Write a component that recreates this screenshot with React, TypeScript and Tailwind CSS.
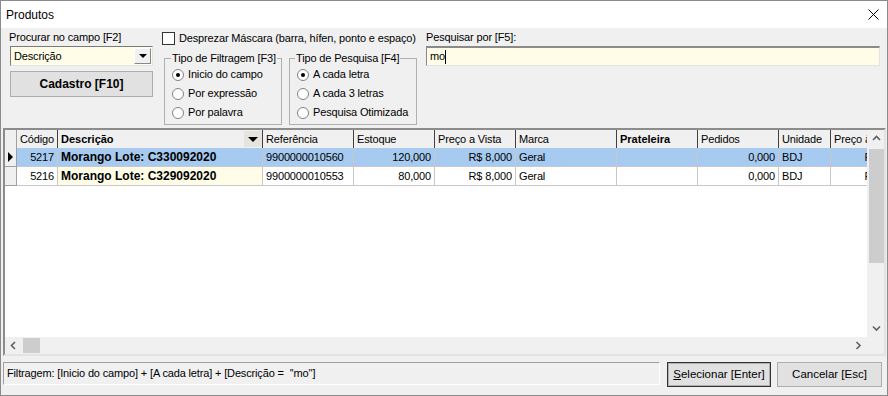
import React from "react";

type Col = { w: number; label: string; bold?: boolean; align: "l" | "r" };

const cols: Col[] = [
  { w: 41, label: "Código", align: "r" },
  { w: 205, label: "Descrição", bold: true, align: "l" },
  { w: 91, label: "Referência", align: "l" },
  { w: 81, label: "Estoque", align: "r" },
  { w: 81, label: "Preço a Vista", align: "r" },
  { w: 101, label: "Marca", align: "l" },
  { w: 81, label: "Prateleira", bold: true, align: "l" },
  { w: 81, label: "Pedidos", align: "r" },
  { w: 52, label: "Unidade", align: "l" },
  { w: 81, label: "Preço à Vista", align: "r" },
];

const rows = [
  ["5217", "Morango Lote: C330092020", "9900000010560", "120,000", "R$ 8,000", "Geral", "", "0,000", "BDJ", "R$ 8,000"],
  ["5216", "Morango Lote: C329092020", "9900000010553", "80,000", "R$ 8,000", "Geral", "", "0,000", "BDJ", "R$ 8,000"],
];

function Radio({ checked, label, ml }: { checked?: boolean; label: string; ml: string }) {
  return (
    <div className="flex items-center h-[19px]">
      <span className={`${ml} w-[12px] h-[12px] shrink-0 rounded-full border border-[#838383] bg-white flex items-center justify-center`}>
        {checked && <span className="w-[4px] h-[4px] rounded-full bg-black" />}
      </span>
      <span className="ml-[4px] whitespace-nowrap">{label}</span>
    </div>
  );
}

function Chevron({ dir }: { dir: "up" | "down" | "left" | "right" }) {
  const pts =
    dir === "up"
      ? "1,5 4.5,1.5 8,5"
      : dir === "down"
      ? "1,1.5 4.5,5 8,1.5"
      : dir === "left"
      ? "5,1 1.5,4.5 5,8"
      : "1.5,1 5,4.5 1.5,8";
  const w = dir === "up" || dir === "down" ? 9 : 7;
  const h = dir === "up" || dir === "down" ? 7 : 9;
  return (
    <svg width={w} height={h} viewBox={`0 0 ${w} ${h}`}>
      <polyline points={pts} fill="none" stroke="#606060" strokeWidth="1.6" />
    </svg>
  );
}

export default function App() {
  return (
    <div className="w-[888px] h-[396px] bg-[#f0f0f0] border border-[#8a8a8a] flex flex-col font-['Liberation_Sans',Arial,sans-serif] text-[11px] tracking-[-0.15px] text-black overflow-hidden">
      {/* Title bar */}
      <div className="h-[27px] bg-white flex items-center justify-between shrink-0">
        <span className="ml-[5px] text-[12px] tracking-normal">Produtos</span>
        <svg width="11" height="11" viewBox="0 0 11 11" className="mr-[8px]">
          <path d="M0.5 0.5 L10.5 10.5 M10.5 0.5 L0.5 10.5" stroke="#000" strokeWidth="1" />
        </svg>
      </div>

      {/* Top panel */}
      <div className="h-[100px] flex shrink-0">
        {/* Column 1 */}
        <div className="ml-[9px] w-[143px] flex flex-col pt-[3px]">
          <div className="h-[13px] leading-[13px] -ml-[1px]">Procurar no campo [F2]</div>
          <div className="mt-[2px] h-[20px] flex bg-[#fffde8] border border-[#7a7a7a] border-b-[#e3e3e3] border-r-[#e3e3e3]">
            <span className="flex-1 pl-[3px] leading-[18px]">Descrição</span>
            <span className="w-[17px] h-[16px] mt-[1px] mr-[1px] bg-[#f0f0f0] border border-[#ffffff] border-b-[#888] border-r-[#888] flex items-center justify-center">
              <svg width="8" height="4" viewBox="0 0 8 4"><path d="M0 0 L8 0 L4 4 Z" fill="#000" /></svg>
            </span>
          </div>
          <button className="mt-[5px] h-[26px] bg-[#e1e1e1] border border-[#adadad] font-bold text-[12px] tracking-normal">
            Cadastro [F10]
          </button>
        </div>

        {/* Column 2 */}
        <div className="ml-[9px] w-[255px] shrink-0 flex flex-col pt-[4px]">
          <div className="flex items-center h-[13px]">
            <span className="w-[13px] h-[13px] shrink-0 bg-white border border-[#333]" />
            <span className="ml-[4px] whitespace-nowrap">Desprezar Máscara (barra, hífen, ponto e espaço)</span>
          </div>
          <div className="flex mt-[7px] ml-[2px] gap-[7px]">
            <fieldset className="w-[118px] h-[73px] border border-[#b0b0b0]">
              <legend className="ml-[6px] px-[1px] leading-[13px]">Tipo de Filtragem [F3]</legend>
              <Radio checked label="Inicio do campo" ml="ml-[7px]" />
              <Radio label="Por expressão" ml="ml-[7px]" />
              <Radio label="Por palavra" ml="ml-[7px]" />
            </fieldset>
            <fieldset className="w-[128px] h-[73px] border border-[#b0b0b0]">
              <legend className="ml-[5px] px-[1px] leading-[13px]">Tipo de Pesquisa [F4]</legend>
              <Radio checked label="A cada letra" ml="ml-[7px]" />
              <Radio label="A cada 3 letras" ml="ml-[7px]" />
              <Radio label="Pesquisa Otimizada" ml="ml-[7px]" />
            </fieldset>
          </div>
        </div>

        {/* Column 3 */}
        <div className="ml-[9px] flex-1 mr-[7px] flex flex-col pt-[3px]">
          <div className="h-[13px] leading-[13px]">Pesquisar por [F5]:</div>
          <div className="mt-[2px] h-[20px] bg-[#fffde8] border-t-2 border-l border-[#8a8a8a] border-b border-r border-b-[#e3e3e3] border-r-[#e3e3e3] flex items-center pl-[3px]">
            <span>mo</span>
            <span className="w-[1px] h-[14px] bg-black" />
          </div>
        </div>
      </div>

      {/* Grid */}
      <div className="ml-[2px] mr-[1px] h-[228px] shrink-0 border-2 border-[#8c8c8c] border-r-[#e3e3e3] border-b-[#e3e3e3] flex flex-col">
        <div className="h-[207px] flex">
          <div className="flex-1 overflow-hidden bg-white">
            {/* header */}
            <div className="flex h-[18px] bg-[#f0f0f0] w-max">
              <div className="w-[12px] shrink-0 border-r border-[#a0a0a0]" />
              {cols.map((c, i) => (
                <div
                  key={i}
                  style={{ width: c.w }}
                  className={`shrink-0 border-r border-[#404040] pl-[3px] leading-[18px] whitespace-nowrap overflow-hidden flex ${c.bold ? "font-bold tracking-normal" : ""}`}
                >
                  <span className="flex-1">{c.label}</span>
                  {i === 1 && (
                    <span className="w-[18px] h-[16px] mt-[1px] bg-[#e6e4dc] flex items-center justify-center">
                      <svg width="10" height="5" viewBox="0 0 10 5"><path d="M0 0 L10 0 L5 5 Z" fill="#000" /></svg>
                    </span>
                  )}
                </div>
              ))}
            </div>
            {rows.map((r, ri) => (
              <div key={ri} className="flex h-[19px] w-max">
                <div className="w-[12px] shrink-0 bg-[#f0f0f0] border-r border-b border-[#a0a0a0] flex items-center justify-center">
                  {ri === 0 && (
                    <svg width="5" height="10" viewBox="0 0 5 10"><path d="M0 0 L5 5 L0 10 Z" fill="#000" /></svg>
                  )}
                </div>
                {cols.map((c, ci) => {
                  const bg = ri === 0 ? "bg-[#a6caf0]" : ci === 1 ? "bg-[#fffde8]" : "bg-white";
                  return (
                    <div
                      key={ci}
                      style={{ width: c.w }}
                      className={`shrink-0 ${bg} border-r border-b border-[#c8c8c8] leading-[18px] whitespace-nowrap overflow-hidden ${
                        c.align === "r" ? "text-right pr-[3px]" : "pl-[3px]"
                      } ${ci === 1 ? "font-bold text-[12px] tracking-normal" : ""}`}
                    >
                      {r[ci]}
                    </div>
                  );
                })}
              </div>
            ))}
          </div>
          {/* vertical scrollbar */}
          <div className="w-[17px] bg-[#f0f0f0] flex flex-col">
            <div className="h-[17px] flex items-center justify-center pl-[2px]">
              <Chevron dir="up" />
            </div>
            <div className="mt-[2px] ml-[2px] h-[114px] bg-[#cdcdcd]" />
            <div className="flex-1" />
            <div className="h-[17px] flex items-center justify-center pl-[2px]">
              <Chevron dir="down" />
            </div>
          </div>
        </div>
        {/* horizontal scrollbar */}
        <div className="h-[17px] flex bg-[#f0f0f0]">
          <div className="w-[17px] flex items-center justify-center">
            <Chevron dir="left" />
          </div>
          <div className="w-[17px] mt-[1px] mb-[1px] ml-[1px] bg-[#cdcdcd]" />
          <div className="flex-1" />
          <div className="w-[17px] flex items-center justify-center">
            <Chevron dir="right" />
          </div>
          <div className="w-[17px]" />
        </div>
      </div>

      {/* Bottom */}
      <div className="flex mt-[6px] ml-[2px]">
        <div className="w-[657px] h-[23px] border border-[#a0a0a0] border-r-white border-b-white flex items-center pl-[3px] whitespace-pre">
          {"Filtragem: [Inicio do campo] + [A cada letra] + [Descrição =  ''mo'']"}
        </div>
        <button className="ml-[7px] w-[104px] h-[25px] bg-[#e1e1e1] border border-[#333] shadow-[inset_0_0_0_1px_#b0b0b0] text-[11.5px] tracking-normal">
          <span className="underline">S</span>elecionar [Enter]
        </button>
        <button className="ml-[6px] w-[105px] h-[25px] bg-[#e1e1e1] border border-[#adadad] text-[11.5px] tracking-normal">
          Cancelar [Esc]
        </button>
      </div>
    </div>
  );
}
